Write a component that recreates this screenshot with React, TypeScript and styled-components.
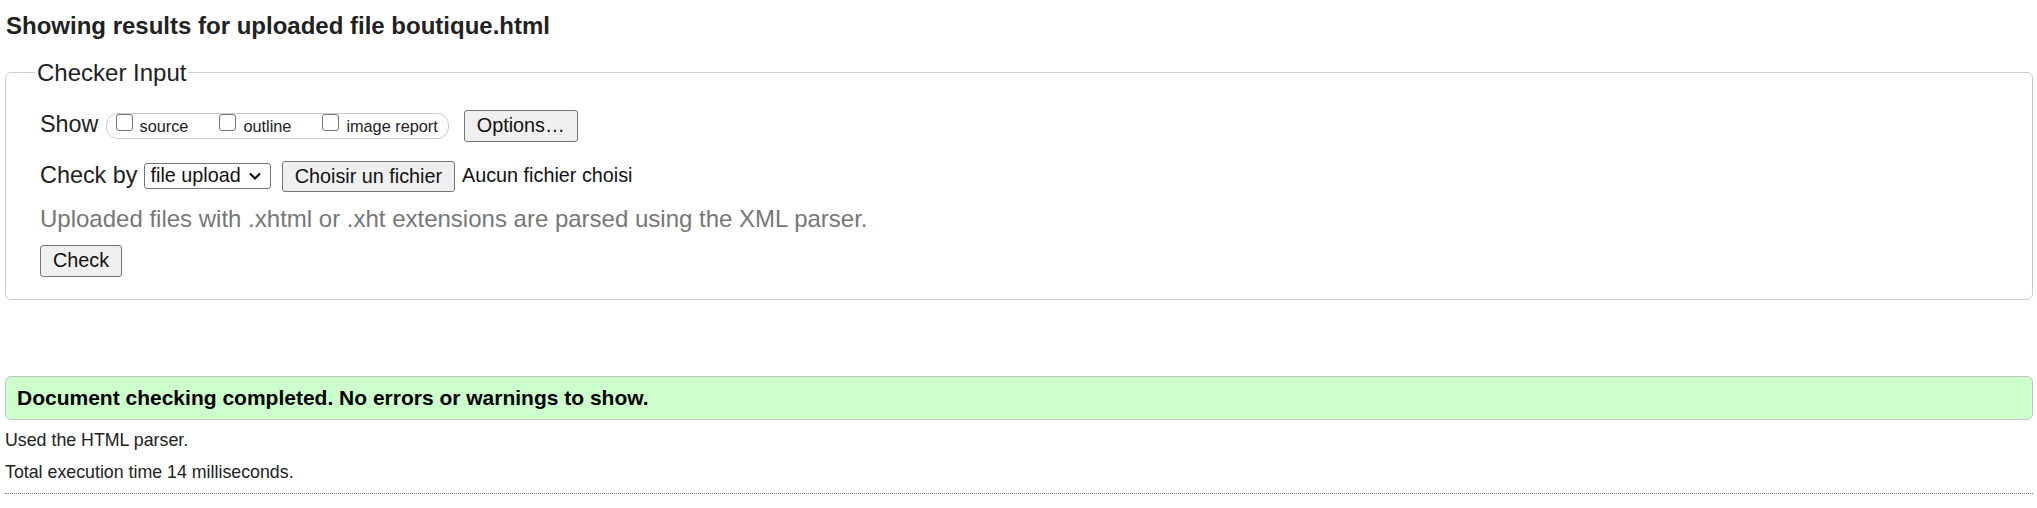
import styled, { createGlobalStyle } from 'styled-components'

const GlobalStyle = createGlobalStyle`
  body {
    margin: 0;
    background: #fff;
    color: #222;
    font-family: 'Liberation Sans', Arial, sans-serif;
  }
`

const Page = styled.div`
  padding: 0 4px 0 5px;
`

const Title = styled.h2`
  margin: 12px 0 0 1px;
  font-size: 24px;
  line-height: 28px;
  font-weight: 700;
  color: #222;
`

const Fieldset = styled.fieldset`
  margin: 19px 0 0;
  padding: 0 20px 22px 34px;
  border: 1px solid #ccc;
  border-radius: 6px;
`

const Legend = styled.legend`
  margin-left: -5px;
  padding: 0 2px;
  font-size: 24px;
  line-height: 27px;
  color: #222;
`

const Row = styled.div<{ $top: number }>`
  display: flex;
  align-items: flex-start;
  margin-top: ${(p) => p.$top}px;
`

const Label = styled.span<{ $gap: number }>`
  font-size: 23.4px;
  line-height: 28px;
  margin-right: ${(p) => p.$gap}px;
  white-space: nowrap;
`

const Pill = styled.div`
  display: flex;
  align-items: flex-start;
  box-sizing: border-box;
  height: 26px;
  margin-top: 3px;
  margin-right: 15px;
  padding: 0 10px 0 9px;
  border: 1px solid #ccc;
  border-radius: 12px;
`

const Box = styled.input`
  appearance: none;
  box-sizing: border-box;
  width: 17px;
  height: 17px;
  margin: 0 7px 0 0;
  border: 1px solid #767676;
  border-radius: 3px;
  background: #fff;
`

const BoxLabel = styled.label<{ $gap: number }>`
  display: flex;
  align-items: flex-start;
  margin-right: ${(p) => p.$gap}px;
  font-size: 16.3px;
  line-height: 22px;
  white-space: nowrap;

  span {
    margin-top: 1px;
  }
`

const Button = styled.button<{ $h: number }>`
  box-sizing: border-box;
  height: ${(p) => p.$h}px;
  padding: 0 12px 2px;
  border: 1px solid #767676;
  border-radius: 3px;
  background: #efefef;
  color: #111;
  font-family: 'Liberation Sans', Arial, sans-serif;
  font-size: 19.8px;
  line-height: 24px;
  white-space: nowrap;
`

const Select = styled.div`
  display: flex;
  align-items: center;
  gap: 7px;
  box-sizing: border-box;
  height: 26px;
  margin-top: 2px;
  margin-right: 11px;
  padding: 0 8px 1px 6px;
  border: 1px solid #767676;
  border-radius: 3px;
  background: #fff;
  font-size: 19.8px;
  color: #111;
  white-space: nowrap;
`

const FileName = styled.span`
  margin: 2px 0 0 7px;
  font-size: 19.8px;
  line-height: 24px;
  color: #111;
  white-space: nowrap;
`

const Note = styled.p`
  margin: 13px 0 0;
  font-size: 24px;
  line-height: 28px;
  color: #777;
`

const CheckRow = styled.div`
  margin-top: 12px;
`

const Success = styled.div`
  margin-top: 76px;
  padding: 8px 11px 9px;
  border: 1px solid #c4c4c4;
  border-radius: 6px;
  background: #ccffcc;
  color: #000;
  font-size: 21px;
  line-height: 25px;
  font-weight: 700;
`

const Info = styled.p<{ $top: number }>`
  margin: ${(p) => p.$top}px 0 0;
  font-size: 17.8px;
  line-height: 21px;
  color: #222;
`

const Rule = styled.hr`
  margin: 10px 0 0;
  border: 0;
  border-top: 1px dotted #777;
`

const Chevron = () => (
  <svg width="14" height="10" viewBox="0 0 14 10">
    <polyline points="2,2.5 7,7.5 12,2.5" fill="none" stroke="#111" strokeWidth="2.2" />
  </svg>
)

export default function App() {
  return (
    <Page>
      <GlobalStyle />
      <Title>Showing results for uploaded file boutique.html</Title>
      <Fieldset>
        <Legend>Checker Input</Legend>
        <Row $top={24}>
          <Label $gap={7}>Show</Label>
          <Pill>
            <BoxLabel $gap={31}>
              <Box type="checkbox" />
              <span>source</span>
            </BoxLabel>
            <BoxLabel $gap={31}>
              <Box type="checkbox" />
              <span>outline</span>
            </BoxLabel>
            <BoxLabel $gap={0}>
              <Box type="checkbox" />
              <span>image report</span>
            </BoxLabel>
          </Pill>
          <Button $h={32}>Options…</Button>
        </Row>
        <Row $top={19}>
          <Label $gap={6}>Check by</Label>
          <Select>
            <span>file upload</span>
            <Chevron />
          </Select>
          <Button $h={31}>Choisir un fichier</Button>
          <FileName>Aucun fichier choisi</FileName>
        </Row>
        <Note>Uploaded files with .xhtml or .xht extensions are parsed using the XML parser.</Note>
        <CheckRow>
          <Button $h={32}>Check</Button>
        </CheckRow>
      </Fieldset>
      <Success>Document checking completed. No errors or warnings to show.</Success>
      <Info $top={10}>Used the HTML parser.</Info>
      <Info $top={11}>Total execution time 14 milliseconds.</Info>
      <Rule />
    </Page>
  )
}
